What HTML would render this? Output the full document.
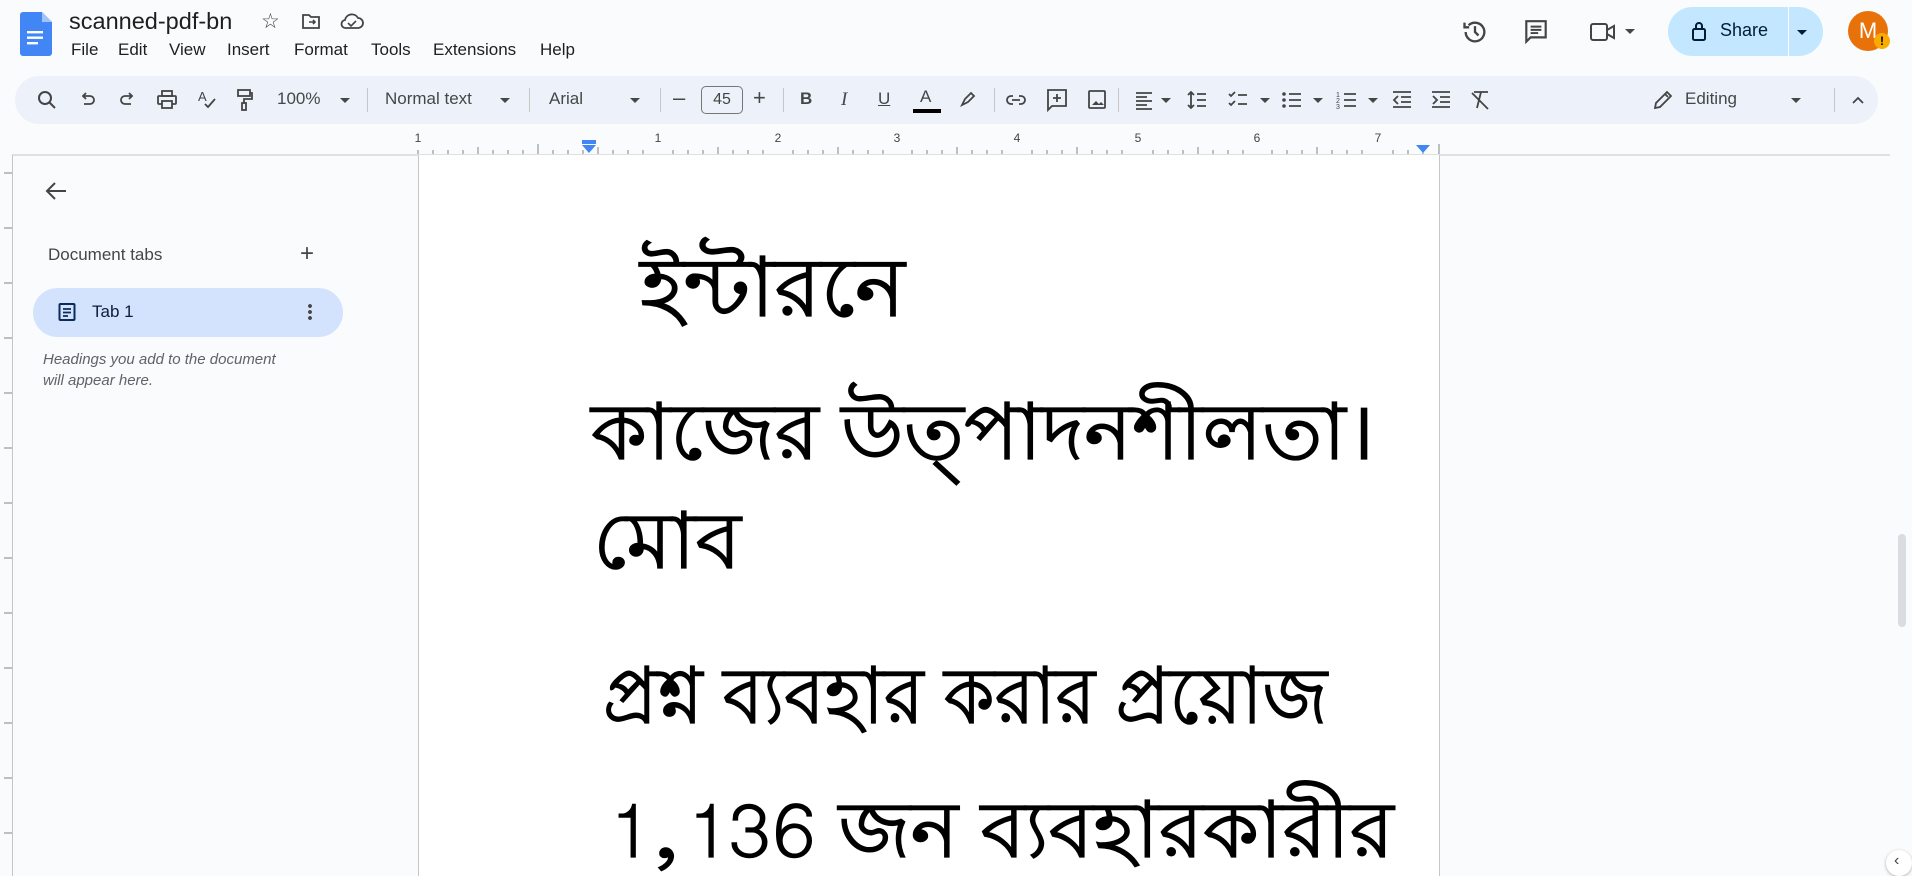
<!DOCTYPE html>
<html><head><meta charset="utf-8"><style>
*{margin:0;padding:0;box-sizing:border-box}
html{width:1912px;height:876px;overflow:hidden}
body{width:1912px;height:876px;overflow:hidden;background:#f9fbfd;font-family:"Liberation Sans",Arial,sans-serif;color:#1f1f1f;position:relative}
.a{position:absolute}
.menu span{position:absolute;top:40px;font-size:17px;color:#1f1f1f}
.tb{position:absolute;left:15px;top:76px;width:1863px;height:48px;background:#edf2fa;border-radius:24px}
.i{position:absolute;top:88px}
.dv{position:absolute;top:88px;width:1px;height:24px;background:#c7c7c7}
.t{position:absolute;top:89px;font-size:17px;color:#444746}
.car{position:absolute;top:98px;width:0;height:0;border-left:5px solid transparent;border-right:5px solid transparent;border-top:5px solid #444746}
.bn{position:absolute;font-family:"Lohit Bengali","Noto Sans Bengali","FreeSans","Liberation Sans",sans-serif;font-size:78px;color:#000;white-space:nowrap;line-height:1;-webkit-text-stroke:1.3px #000;transform-origin:0 0}
#pg{position:absolute;left:418px;top:155px;width:1022px;height:721px;background:#fff;border-left:1px solid #c7c7c7;border-right:1px solid #c7c7c7;overflow:hidden}
</style></head><body>
<svg class="a" style="left:20px;top:12px" width="32" height="44" viewBox="0 0 32 44"><path d="M3 0h19l10 10v31a3 3 0 0 1-3 3H3a3 3 0 0 1-3-3V3a3 3 0 0 1 3-3z" fill="#4285f4"/><path d="M22 0v10h10z" fill="#a1c2fa"/><rect x="7" y="19" width="16" height="2.4" fill="#fff"/><rect x="7" y="24.5" width="16" height="2.4" fill="#fff"/><rect x="7" y="30" width="11" height="2.4" fill="#fff"/></svg>
<div class="a" style="left:69px;top:8px;font-size:23.5px">scanned-pdf-bn</div>
<div class="a" style="left:261px;top:9px;font-size:21px;color:#444">☆</div>
<svg class="a" style="left:301px;top:12px" width="20" height="18" viewBox="0 0 20 18"><path d="M2 3h6l2 2h8v11H2z" fill="none" stroke="#444" stroke-width="1.8"/><path d="M8 10h6m-2-2 2 2-2 2" stroke="#444" stroke-width="1.6" fill="none"/></svg>
<svg class="a" style="left:340px;top:12px" width="24" height="18" viewBox="0 0 24 18"><path d="M6 16h12a5 5 0 0 0 0-10 7 7 0 0 0-13 2 4 4 0 0 0 1 8z" fill="none" stroke="#444" stroke-width="1.8"/><path d="M8 11l3 3 5-5" stroke="#444" stroke-width="1.6" fill="none"/></svg>
<div class="menu"><span style="left:71px">File</span><span style="left:118px">Edit</span><span style="left:169px">View</span><span style="left:227px">Insert</span><span style="left:294px">Format</span><span style="left:371px">Tools</span><span style="left:433px">Extensions</span><span style="left:540px">Help</span></div>
<svg class="a" style="left:1461px;top:18px" width="28" height="28" viewBox="0 0 24 24"><path d="M4 12a8 8 0 1 0 2.5-5.8" fill="none" stroke="#444" stroke-width="2"/><path d="M3 4v4h4" fill="none" stroke="#444" stroke-width="2"/><path d="M12 7v5l3 3" fill="none" stroke="#444" stroke-width="2"/></svg>
<svg class="a" style="left:1523px;top:18px" width="26" height="28" viewBox="0 0 24 26"><path d="M3 3h18v15H7l-4 4z" fill="none" stroke="#444" stroke-width="2"/><path d="M7 8h10M7 11h10M7 14h7" stroke="#444" stroke-width="1.8"/></svg>
<svg class="a" style="left:1589px;top:20px" width="28" height="24" viewBox="0 0 28 24"><rect x="2" y="4" width="16" height="16" rx="2" fill="none" stroke="#444" stroke-width="2"/><path d="M18 10l7-4v12l-7-4z" fill="none" stroke="#444" stroke-width="2"/></svg>
<div class="car" style="left:1625px;top:29px"></div>
<div class="a" style="left:1668px;top:7px;width:155px;height:49px;border-radius:25px;background:#c2e7ff"></div>
<div class="a" style="left:1788px;top:7px;width:1px;height:49px;background:#fff"></div>
<svg class="a" style="left:1691px;top:20px" width="16" height="22" viewBox="0 0 16 22"><rect x="2" y="9" width="12" height="11" rx="1.5" fill="none" stroke="#001d35" stroke-width="2"/><path d="M5 9V6a3 3 0 0 1 6 0v3" fill="none" stroke="#001d35" stroke-width="2"/></svg>
<div class="a" style="left:1720px;top:20px;font-size:18px;color:#001d35">Share</div>
<div class="car" style="left:1797px;top:30px;border-top-color:#001d35"></div>
<div class="a" style="left:1848px;top:11px;width:40px;height:40px;border-radius:50%;background:#e8710a;color:#fff;font-size:22px;text-align:center;line-height:40px">M</div>
<div class="a" style="left:1874px;top:33px;width:16px;height:16px;border-radius:50%;background:#f9ab00;color:#000;font-size:12px;font-weight:bold;text-align:center;line-height:16px">!</div>
<div class="tb"></div>
<svg class="i" style="left:36px" width="22" height="24" viewBox="0 0 22 24"><circle cx="9" cy="10" r="6" fill="none" stroke="#444" stroke-width="2"/><path d="M13 14l6 6" stroke="#444" stroke-width="2"/></svg>
<svg class="i" style="left:78px" width="20" height="24" viewBox="0 0 20 24"><path d="M6 8h6a4 4 0 0 1 0 8H6" fill="none" stroke="#444" stroke-width="1.8"/><path d="M8 5L5 8l3 3" fill="none" stroke="#444" stroke-width="1.8"/></svg>
<svg class="i" style="left:117px" width="20" height="24" viewBox="0 0 20 24"><path d="M14 8H8a4 4 0 0 0 0 8h6" fill="none" stroke="#444" stroke-width="1.8"/><path d="M12 5l3 3-3 3" fill="none" stroke="#444" stroke-width="1.8"/></svg>
<svg class="i" style="left:156px" width="22" height="24" viewBox="0 0 22 24"><rect x="6" y="3" width="10" height="5" fill="none" stroke="#444" stroke-width="1.8"/><rect x="2" y="8" width="18" height="8" rx="1" fill="none" stroke="#444" stroke-width="1.8"/><rect x="6" y="13" width="10" height="7" fill="#edf2fa" stroke="#444" stroke-width="1.8"/></svg>
<svg class="i" style="left:197px" width="22" height="24" viewBox="0 0 22 24"><text x="1" y="13" font-size="13" fill="#444" font-family="Liberation Sans">A</text><path d="M8 16l3 3 7-8" fill="none" stroke="#444" stroke-width="1.8"/></svg>
<svg class="i" style="left:235px" width="20" height="24" viewBox="0 0 20 24"><rect x="3" y="2" width="12" height="6" fill="none" stroke="#444" stroke-width="1.8"/><path d="M15 5h2v6H9v4" fill="none" stroke="#444" stroke-width="1.8"/><rect x="7" y="15" width="4" height="7" fill="none" stroke="#444" stroke-width="1.8"/></svg>
<div class="t" style="left:277px">100%</div><div class="car" style="left:340px"></div>
<div class="dv" style="left:367px"></div>
<div class="t" style="left:385px">Normal text</div><div class="car" style="left:500px"></div>
<div class="dv" style="left:529px"></div>
<div class="t" style="left:549px">Arial</div><div class="car" style="left:630px"></div>
<div class="dv" style="left:660px"></div>
<div class="t" style="left:673px;font-size:22px;top:85px">–</div>
<div class="a" style="left:701px;top:86px;width:42px;height:28px;border:1px solid #747775;border-radius:5px;font-size:16px;text-align:center;line-height:26px;color:#444">45</div>
<div class="t" style="left:753px;font-size:22px;top:85px">+</div>
<div class="dv" style="left:783px"></div>
<div class="t" style="left:800px;font-weight:bold">B</div>
<div class="t" style="left:841px;font-style:italic;font-family:'Liberation Serif';font-size:19px">I</div>
<div class="t" style="left:878px;text-decoration:underline">U</div>
<div class="t" style="left:920px;top:87px">A</div><div class="a" style="left:913px;top:109px;width:28px;height:4px;background:#000"></div>
<svg class="i" style="left:958px" width="20" height="24" viewBox="0 0 20 24"><path d="M4 17l3-6 6-6 3 3-6 6z" fill="none" stroke="#444" stroke-width="1.8"/></svg>
<div class="dv" style="left:994px"></div>
<svg class="i" style="left:1005px" width="22" height="24" viewBox="0 0 22 24"><path d="M8 8H6a4 4 0 0 0 0 8h2M14 8h2a4 4 0 0 1 0 8h-2M7 12h8" fill="none" stroke="#444" stroke-width="1.8"/></svg>
<svg class="i" style="left:1046px" width="22" height="24" viewBox="0 0 22 24"><path d="M2 2h18v16H6l-4 4z" fill="none" stroke="#444" stroke-width="1.8"/><path d="M11 6v8M7 10h8" stroke="#444" stroke-width="1.8"/></svg>
<svg class="i" style="left:1086px" width="22" height="24" viewBox="0 0 22 24"><rect x="3" y="3" width="16" height="17" rx="1" fill="none" stroke="#444" stroke-width="1.8"/><path d="M6 17l4-4 3 3 2-2 3 3z" fill="#444"/></svg>
<div class="dv" style="left:1118px"></div>
<svg class="i" style="left:1134px" width="20" height="24" viewBox="0 0 20 24"><path d="M2 5h16M2 9h11M2 13h16M2 17h11M2 21h16" stroke="#444" stroke-width="1.8"/></svg><div class="car" style="left:1161px"></div>
<svg class="i" style="left:1186px" width="22" height="24" viewBox="0 0 22 24"><path d="M5 4v16M2 7l3-3 3 3M2 17l3 3 3-3M11 6h9M11 12h9M11 18h9" fill="none" stroke="#444" stroke-width="1.8"/></svg>
<svg class="i" style="left:1227px" width="22" height="24" viewBox="0 0 22 24"><path d="M2 6l2 2 4-4M2 15l2 2 4-4M11 7h9M11 16h9" fill="none" stroke="#444" stroke-width="1.8"/></svg><div class="car" style="left:1260px"></div>
<svg class="i" style="left:1281px" width="22" height="24" viewBox="0 0 22 24"><circle cx="3" cy="6" r="1.8" fill="#444"/><circle cx="3" cy="12" r="1.8" fill="#444"/><circle cx="3" cy="18" r="1.8" fill="#444"/><path d="M8 6h12M8 12h12M8 18h12" stroke="#444" stroke-width="1.8"/></svg><div class="car" style="left:1313px"></div>
<svg class="i" style="left:1336px" width="22" height="24" viewBox="0 0 22 24"><text x="0" y="9" font-size="7" fill="#444">1</text><text x="0" y="15" font-size="7" fill="#444">2</text><text x="0" y="21" font-size="7" fill="#444">3</text><path d="M8 6h12M8 12h12M8 18h12" stroke="#444" stroke-width="1.8"/></svg><div class="car" style="left:1368px"></div>
<svg class="i" style="left:1391px" width="22" height="24" viewBox="0 0 22 24"><path d="M2 4h18M10 9h10M10 14h10M2 19h18M7 8l-4 4 4 4" fill="none" stroke="#444" stroke-width="1.8"/></svg>
<svg class="i" style="left:1430px" width="22" height="24" viewBox="0 0 22 24"><path d="M2 4h18M10 9h10M10 14h10M2 19h18M3 8l4 4-4 4" fill="none" stroke="#444" stroke-width="1.8"/></svg>
<svg class="i" style="left:1469px" width="22" height="24" viewBox="0 0 22 24"><path d="M5 4h14M12 4l-4 16M3 5l16 16" fill="none" stroke="#444" stroke-width="1.8"/></svg>
<svg class="i" style="left:1652px" width="20" height="24" viewBox="0 0 20 24"><path d="M3 20l1-5L15 4l4 4L8 19zM13 6l3 3" fill="none" stroke="#444" stroke-width="1.8"/></svg>
<div class="t" style="left:1685px">Editing</div><div class="car" style="left:1791px"></div>
<div class="dv" style="left:1834px"></div>
<svg class="i" style="left:1850px" width="16" height="24" viewBox="0 0 16 24"><path d="M3 15l5-5 5 5" fill="none" stroke="#444" stroke-width="1.8"/></svg>
<svg class="a" style="left:0;top:130px" width="1912" height="26">
<line x1="12" y1="25" x2="1890" y2="25" stroke="#c4c7c5"/>
<g font-size="12" fill="#444" font-family="Liberation Sans" text-anchor="middle">
<text x="418" y="12">1</text><text x="658" y="12">1</text><text x="778" y="12">2</text><text x="897" y="12">3</text><text x="1017" y="12">4</text><text x="1138" y="12">5</text><text x="1257" y="12">6</text><text x="1378" y="12">7</text></g>
<path d="M418 24 V20 M433 24V20 M448 24V20 M463 24V20 M478 24V17 M493 24V20 M508 24V20 M523 24V20 M538 24V14 M553 24V20 M568 24V20 M583 24V20 M598 24V17 M613 24V20 M628 24V20 M643 24V20 M673 24V20 M688 24V20 M703 24V20 M718 24V17 M733 24V20 M748 24V20 M763 24V20 M793 24V20 M808 24V20 M823 24V20 M838 24V17 M853 24V20 M868 24V20 M883 24V20 M912 24V20 M927 24V20 M942 24V20 M957 24V17 M972 24V20 M987 24V20 M1002 24V20 M1032 24V20 M1047 24V20 M1062 24V20 M1077 24V17 M1092 24V20 M1107 24V20 M1122 24V20 M1153 24V20 M1168 24V20 M1183 24V20 M1198 24V17 M1213 24V20 M1228 24V20 M1243 24V20 M1272 24V20 M1287 24V20 M1302 24V20 M1317 24V17 M1332 24V20 M1347 24V20 M1362 24V20 M1393 24V20 M1408 24V20 M1423 24V20 M1439 24V14" stroke="#80868b"/>
<rect x="582" y="10" width="14" height="4" fill="#4285f4"/><path d="M582 15h14l-7 8z" fill="#4285f4"/>
<path d="M1416 15h14l-7 8z" fill="#4285f4"/>
</svg>
<div class="a" style="left:12px;top:155px;width:1px;height:721px;background:#c4c7c5"></div>
<svg class="a" style="left:0;top:155px" width="12" height="721"><path d="M4 18H12M4 73H12M4 128H12M4 183H12M4 238H12M4 293H12M4 348H12M4 403H12M4 458H12M4 513H12M4 568H12M4 623H12M4 678H12" stroke="#80868b"/></svg>
<svg class="a" style="left:44px;top:180px" width="24" height="22" viewBox="0 0 24 22"><path d="M22 11H3M11 3l-8 8 8 8" fill="none" stroke="#444" stroke-width="2"/></svg>
<div class="a" style="left:48px;top:245px;font-size:17px;color:#444746">Document tabs</div>
<div class="a" style="left:300px;top:240px;font-size:24px;color:#444746">+</div>
<div class="a" style="left:33px;top:288px;width:310px;height:49px;border-radius:25px;background:#d3e3fd"></div>
<svg class="a" style="left:58px;top:302px" width="18" height="20" viewBox="0 0 18 20"><rect x="1.5" y="2" width="15" height="16" rx="1" fill="none" stroke="#0b2b5c" stroke-width="2"/><path d="M5 7h8M5 10.5h8M5 14h5" stroke="#0b2b5c" stroke-width="1.8"/></svg>
<div class="a" style="left:92px;top:302px;font-size:17px;color:#0b1d3c">Tab 1</div>
<div class="a" style="left:308px;top:303px;width:4px;height:18px;background:radial-gradient(circle,#444 1.8px,transparent 2px) 0 0/4px 6px"></div>
<div class="a" style="left:43px;top:349px;font-size:15px;font-style:italic;color:#5f6368;line-height:21px">Headings you add to the document<br>will appear here.</div>
<div id="pg">
<div class="bn" style="left:221px;top:97px;transform:scale(1.08,1.05)">ইন্টারনে</div>
<div class="bn" style="left:172px;top:243px;transform:scaleX(1.03)">কাজের উত্পাদনশীলতা।</div>
<div class="bn" style="left:174px;top:352px;transform:scaleX(1.05)">মোব</div>
<div class="bn" style="left:184px;top:507px;transform:scaleX(0.93)">প্রশ্ন ব্যবহার করার প্রয়োজ</div>
<div class="bn" style="left:186px;top:641px;transform:scaleX(1.03)">1,136 জন ব্যবহারকারীর</div>
</div>
<div class="a" style="left:1898px;top:534px;width:8px;height:93px;border-radius:4px;background:#dadce0"></div>
<div class="a" style="left:1886px;top:850px;width:26px;height:26px;border-radius:50%;background:#fff;box-shadow:0 1px 3px rgba(0,0,0,.3);font-size:16px;line-height:22px;padding-left:8px;color:#444">‹</div>
</body></html>
